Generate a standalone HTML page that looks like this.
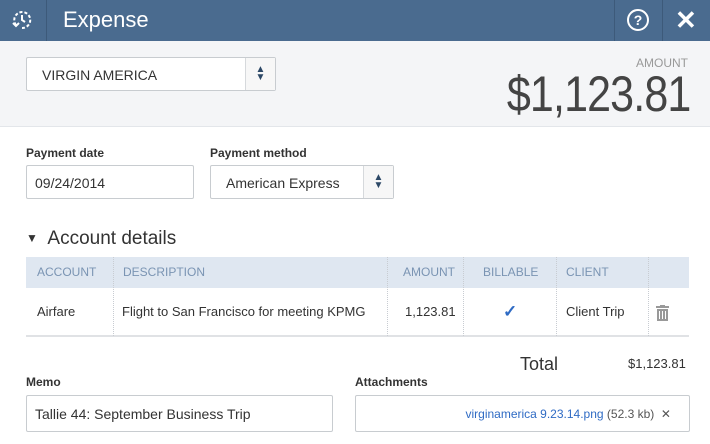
<!DOCTYPE html>
<html><head><style>
*{box-sizing:border-box;margin:0;padding:0}
body{width:710px;height:444px;overflow:hidden;background:#fff;font-family:"Liberation Sans",sans-serif;color:#333;position:relative}
.a{position:absolute}
.hdr{left:0;top:0;width:710px;height:41px;background:#4a6b8f}
.top{left:0;top:41px;width:710px;height:86px;background:#f4f5f7;border-bottom:1px solid #e3e6ea}
.box{position:absolute;background:#fff;border:1px solid #c8ccd0;border-radius:2px;font-size:14px;color:#333}
.spin{position:absolute;right:0;top:0;bottom:0;width:30px;border-left:1px solid #d6d9dc;background:#f7f7f7;display:flex;align-items:center;justify-content:center}
.lbl{font-size:12px;font-weight:bold;color:#333}
.th{position:absolute;top:257px;height:31px;line-height:31px;font-size:12px;color:#7a94b3}
.td{position:absolute;top:288px;height:48px;line-height:48px;font-size:13px;color:#333}
.vl{position:absolute;width:1px;border-left:1px dotted #c8ccd2}
</style></head><body>
<div class="a hdr"></div>
<svg class="a" style="left:10px;top:8px" width="24" height="24" viewBox="0 0 24 24" fill="none" stroke="#fff" stroke-width="2"><path d="M6 17 A8 8 0 1 1 12 20" stroke-dasharray="3 2"/><path d="M12 7v5l3 2"/><path d="M3 15l3 3 3-3"/></svg>
<div class="a" style="left:46px;top:0;width:1px;height:41px;background:#3d5a7a"></div>
<div class="a" style="left:63px;top:7px;font-size:22px;color:#fff">Expense</div>
<div class="a" style="left:614px;top:0;width:1px;height:41px;background:#3d5a7a"></div>
<div class="a" style="left:662px;top:0;width:1px;height:41px;background:#3d5a7a"></div>
<div class="a" style="left:627px;top:9px;width:22px;height:22px;border:2px solid #fff;border-radius:50%;color:#fff;font-size:14px;font-weight:bold;text-align:center;line-height:19px">?</div>
<div class="a" style="left:675px;top:5px;color:#fff;font-size:26px;font-weight:bold">✕</div>
<div class="a top"></div>
<div class="box" style="left:26px;top:57px;width:250px;height:34px"><span class="a" style="left:15px;top:9px">VIRGIN AMERICA</span><div class="spin" style="font-size:10px;color:#2c4866;line-height:8px;flex-direction:column">▲<br>▼</div></div>
<div class="a" style="right:22px;top:56px;font-size:12px;color:#999">AMOUNT</div>
<div class="a" style="right:20px;top:65px;font-size:50px;color:#444;transform:scaleX(.86);transform-origin:right;letter-spacing:-1px">$1,123.81</div>
<div class="a lbl" style="left:26px;top:146px">Payment date</div>
<div class="a lbl" style="left:210px;top:146px">Payment method</div>
<div class="box" style="left:26px;top:165px;width:168px;height:34px"><span class="a" style="left:8px;top:9px">09/24/2014</span></div>
<div class="box" style="left:210px;top:165px;width:184px;height:34px"><span class="a" style="left:15px;top:9px">American Express</span><div class="spin" style="font-size:10px;color:#2c4866;line-height:8px;flex-direction:column">▲<br>▼</div></div>
<div class="a" style="left:26px;top:228px;font-size:19px;color:#333"><span style="font-size:12px;position:relative;top:-2px">▼</span>&nbsp; Account details</div>
<div class="a" style="left:26px;top:257px;width:663px;height:31px;background:#dfe7f1"></div>
<div class="a" style="left:26px;top:335px;width:663px;height:2px;background:#e0e2e5"></div>
<div class="th" style="left:37px">ACCOUNT</div>
<div class="th" style="left:123px">DESCRIPTION</div>
<div class="th" style="left:403px">AMOUNT</div>
<div class="th" style="left:483px">BILLABLE</div>
<div class="th" style="left:566px">CLIENT</div>
<div class="vl" style="left:113px;top:257px;height:79px"></div>
<div class="vl" style="left:387px;top:257px;height:79px"></div>
<div class="vl" style="left:463px;top:257px;height:79px"></div>
<div class="vl" style="left:556px;top:257px;height:79px"></div>
<div class="vl" style="left:648px;top:257px;height:79px"></div>
<div class="td" style="left:37px">Airfare</div>
<div class="td" style="left:122px">Flight to San Francisco for meeting KPMG</div>
<div class="td" style="left:405px">1,123.81</div>
<div class="td" style="left:503px;color:#2f6bc4;font-size:17px;font-weight:bold">✓</div>
<div class="td" style="left:566px">Client Trip</div>
<svg class="a" style="left:656px;top:305px" width="13" height="16" viewBox="0 0 13 16" fill="#999"><rect x="0" y="1" width="13" height="2"/><rect x="4" y="0" width="5" height="2"/><path d="M1 4h11v12H1z M3 6v8h1V6z M6 6v8h1V6z M9 6v8h1V6z" fill-rule="evenodd"/></svg>
<div class="a" style="left:520px;top:354px;font-size:18px;color:#333">Total</div>
<div class="a" style="left:628px;top:356px;font-size:13px;color:#333">$1,123.81</div>
<div class="a lbl" style="left:26px;top:375px">Memo</div>
<div class="a lbl" style="left:355px;top:375px">Attachments</div>
<div class="box" style="left:26px;top:395px;width:307px;height:37px"><span class="a" style="left:8px;top:10px">Tallie 44: September Business Trip</span></div>
<div class="box" style="left:355px;top:395px;width:335px;height:37px"><span class="a" style="right:18px;top:11px;font-size:12px;color:#555;white-space:nowrap"><span style="color:#2f6bc4">virginamerica 9.23.14.png</span> (52.3 kb) &nbsp;✕</span></div>
</body></html>
